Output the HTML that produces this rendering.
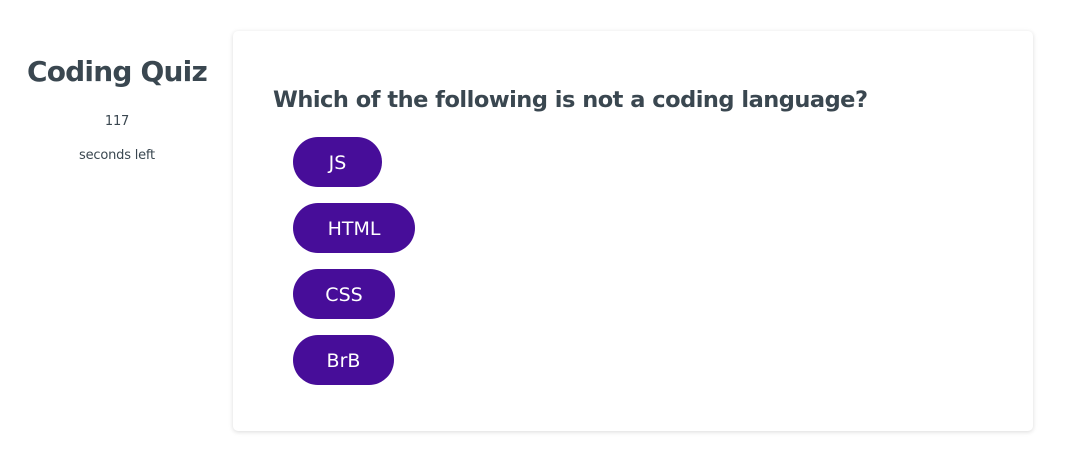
<!DOCTYPE html>
<html><head><style>
body{margin:0;width:1068px;height:463px;background:#fff;font-family:"DejaVu Sans","Liberation Sans",sans-serif;color:#3a4750;position:relative;overflow:hidden}
h1{position:absolute;left:17px;top:55px;width:200px;margin:0;text-align:center;font-size:28px;font-weight:bold;letter-spacing:-0.8px}
.t{position:absolute;width:200px;left:17px;text-align:center;font-size:13px;letter-spacing:-0.2px}
.card{position:absolute;left:233px;top:31px;width:800px;height:400px;border-radius:5px;box-shadow:0 1px 5px rgba(0,0,0,.15);background:#fff}
.q{position:absolute;left:40px;top:56px;font-size:22.5px;font-weight:bold;margin:0;letter-spacing:-0.5px}
.b{position:absolute;left:60px;height:50px;border-radius:25px;background:#470d99;color:#fff;font-size:19px;line-height:52px;text-align:center}
</style></head><body>
<h1>Coding Quiz</h1>
<div class="t" style="top:114px">117</div>
<div class="t" style="top:148px">seconds left</div>
<div class="card">
<div class="q">Which of the following is not a coding language?</div>
<div class="b" style="top:106px;width:89px">JS</div>
<div class="b" style="top:172px;width:122px">HTML</div>
<div class="b" style="top:238px;width:102px">CSS</div>
<div class="b" style="top:304px;width:101px">BrB</div>
</div>
</body></html>
